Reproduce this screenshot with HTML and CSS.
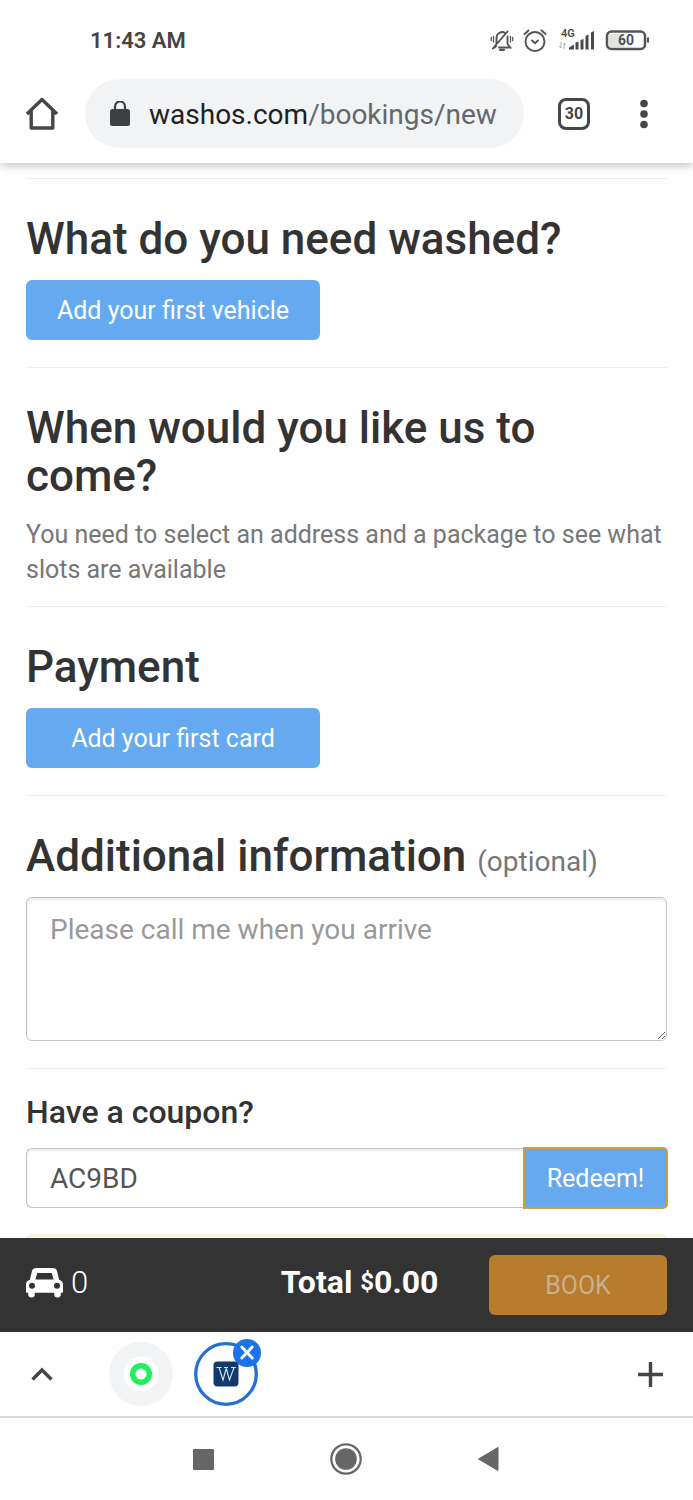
FILE: index.html
```html
<!DOCTYPE html>
<html lang="en">
<head>
<meta charset="utf-8">
<meta name="viewport" content="width=device-width, initial-scale=1">
<title>New booking</title>
<link rel="stylesheet" href="styles.css">
</head>
<body>
<header class="chrome">
  <div class="status">
    <span class="clock">11:43 AM</span>
    <div class="indicators">
      <svg class="bell" width="24" height="24" viewBox="0 0 24 24" fill="none" stroke="#555" stroke-width="1.9" stroke-linecap="round">
        <path d="M6.500 15V9a5.800 5.800 0 0 1 8.500-5.200M17.500 7.500V15l2.800 3.500H9M6.200 17.200l-2 1.500M2.800 19.500 17.500 2.500"/>
        <path d="M10 20.800h4" stroke-width="2.200"/>
        <path d="M3.500 7.500v5.500M1.300 8.500v3M20.500 7.500v5.500M22.700 8.500v3" stroke-width="1.300"/>
      </svg>
      <svg class="alarm" width="24" height="24" viewBox="0 0 24 24" fill="none" stroke="#555" stroke-width="1.900" stroke-linecap="round" stroke-linejoin="round">
        <circle cx="12" cy="12.500" r="9.500"/><path d="m9 11.500 3 2.700 3-2.700M1.500 5l4-3.500M22.500 5l-4-3.500"/>
      </svg>
      <svg class="signal" width="38" height="32" viewBox="0 -4 38 32" fill="#4a4a4a">
        <text x="3" y="8" class="network">4G</text>
        <path d="M11 20.500v-2l5-3v5zM17.500 20.500v-7l3-1v8zM22.500 20.500V11l3-1v10.500zM27.500 20.500V7l3-1.500v15zM33 20.500V3.500l3-1.500v18.500z"/>
        <path d="M3 13v6l-2-2M6 20v-6l2 2" fill="none" stroke="#aaa"/>
      </svg>
      <svg class="battery" width="45" height="22" viewBox="0 0 45 22">
        <rect x="4" y="4" width="15" height="13" fill="#e2e2e2"/>
        <rect x="2" y="1.500" width="38" height="17.500" rx="4.500" fill="none" stroke="#555" stroke-width="2.500"/>
        <path d="M43 7.500v5" stroke="#555" stroke-width="2.200"/>
        <text x="21" y="15" text-anchor="middle" class="charge">60</text>
      </svg>
    </div>
  </div>
  <div class="toolbar">
    <button class="icon-btn" aria-label="Home">
      <svg width="34" height="34" viewBox="0 0 34 34" fill="none" stroke="#444648" stroke-width="3.400" stroke-linejoin="round"><path d="M2 17 17 2.500 32 17M6.200 14v17h21.600V14"/></svg>
    </button>
    <button class="address">
      <svg width="20" height="26" viewBox="0 0 20 26"><rect y="8" width="20" height="17" rx="2.500" fill="#3c4043"/><path d="M5 9V5.500a5 5 0 0 1 10 0V9" fill="none" stroke="#3c4043" stroke-width="2.200"/></svg>
      <span class="url"><span class="host">washos.com</span>/bookings/new</span>
    </button>
    <button class="tab-count" aria-label="30 open tabs">30</button>
    <button class="icon-btn" aria-label="More options">
      <svg width="10" height="30" viewBox="0 0 10 30" fill="#444648"><circle cx="5" cy="4.500" r="3.800"/><circle cx="5" cy="15" r="3.800"/><circle cx="5" cy="25.500" r="3.800"/></svg>
    </button>
  </div>
</header>

<main class="page">
  <section class="block">
    <h2>What do you need washed?</h2>
    <button class="btn">Add your first vehicle</button>
  </section>
  <section class="block notes">
    <h2>When would you like us to come?</h2>
    <p>You need to select an address and a package to see what slots are available</p>
  </section>
  <section class="block">
    <h2>Payment</h2>
    <button class="btn">Add your first card</button>
  </section>
  <section class="block">
    <h2><label for="info">Additional information <small>(optional)</small></label></h2>
    <textarea id="info" class="field" placeholder="Please call me when you arrive"></textarea>
  </section>
  <section class="block coupon">
    <h3><label for="coupon">Have a coupon?</label></h3>
    <div class="group">
      <input id="coupon" class="field" type="text" value="AC9BD">
      <button class="redeem">Redeem!</button>
    </div>
    <div class="alert"></div>
  </section>
</main>

<section class="summary">
  <span class="cars">
    <svg width="37" height="30" viewBox="0 0 37 30"><path fill="#fff" fill-rule="evenodd" d="M10.500 0h16c2.500 0 4 1 4.600 3.300L33.200 12c2.500.500 3.800 2 3.800 4.500v7.300c0 .700-.300 1-1 1h-1.200v1.400a3.300 3.300 0 0 1-6.600 0v-1.400H8.800v1.400a3.300 3.300 0 0 1-6.600 0v-1.400H1c-.700 0-1-.300-1-1v-7.300C0 14 1.300 12.500 3.800 12l2.100-8.700C6.500 1 8 0 10.500 0zm.700 5L9.400 11.600h18.200L25.800 5zM6 14.700a3 3 0 1 0 0 6 3 3 0 0 0 0-6zm25 0a3 3 0 1 0 0 6 3 3 0 0 0 0-6z"/></svg>
    <span>0</span>
  </span>
  <strong class="total">Total <span class="currency">$</span>0.00</strong>
  <button class="book" disabled>BOOK</button>
</section>

<nav class="tabs" aria-label="Tab group">
  <button class="icon-btn" aria-label="Show all tabs">
    <svg width="22" height="14" viewBox="0 0 22 14" fill="none" stroke="#444648" stroke-width="3.400"><path d="m1.500 12.500 9.500-9.500 9.500 9.500"/></svg>
  </button>
  <button class="tab" aria-label="Other tab">
    <svg width="64" height="64" viewBox="0 0 64 64"><circle cx="32" cy="32" r="32" fill="#f1f3f4"/><circle cx="32" cy="32" r="17.500" fill="#fff"/><circle cx="32" cy="32" r="8.300" fill="none" stroke="#1df05a" stroke-width="5.500"/></svg>
  </button>
  <button class="tab current" aria-label="Close current tab">
    <svg width="64" height="64" viewBox="0 0 64 64"><circle cx="32" cy="32" r="30.300" fill="#fff" stroke="#2671d0" stroke-width="3.300"/><rect x="19.500" y="19.500" width="25" height="25" rx="4" fill="#103a6b"/><path d="M22.500 25.500h5M30 25.500h4M37 25.500h5M25 25.500l4 12.500 3.500-12.500M32 25.500l3.500 12.500 4.500-12.500" fill="none" stroke="#d5e6f5" stroke-width="1.100"/></svg>
    <svg class="close" width="28" height="28" viewBox="0 0 28 28"><circle cx="14" cy="14" r="14" fill="#1a73e8"/><path d="m8.800 8 10.400 11M19.200 8 8.800 19" stroke="#fff" stroke-width="3" stroke-linecap="round"/></svg>
  </button>
  <button class="icon-btn add" aria-label="New tab">
    <svg width="25" height="25" viewBox="0 0 25 25" stroke="#444648" stroke-width="3.400"><path d="M12.500 0v25M0 12.500h25"/></svg>
  </button>
</nav>

<nav class="system" aria-label="System navigation">
  <button class="icon-btn" aria-label="Recent apps"><svg width="21" height="21" viewBox="0 0 21 21"><rect width="21" height="21" rx="1" fill="#666"/></svg></button>
  <button class="icon-btn" aria-label="Home screen"><svg width="32" height="32" viewBox="0 0 32 32"><circle cx="16" cy="16" r="14.700" fill="none" stroke="#666" stroke-width="2.200"/><circle cx="16" cy="16" r="10.800" fill="#666"/></svg></button>
  <button class="icon-btn" aria-label="Back"><svg width="21" height="24" viewBox="0 0 21 24"><path d="M0.500 12 20 .500v23z" fill="#666" stroke="#666" stroke-linejoin="round"/></svg></button>
</nav>
</body>
</html>
```
FILE: styles.css
```css
* { box-sizing: border-box; }

body {
  margin: 0;
  height: 100vh;
  display: flex;
  flex-direction: column;
  overflow: hidden;
  background: #fefefe;
  color: #333;
  font-family: Roboto, "Liberation Sans", sans-serif;
  font-size: 25px;
}

button, input, textarea { font: inherit; margin: 0; }
button { padding: 0; border: 0; background: none; color: inherit; }
svg { display: block; flex: none; }
h2, h3, p { margin: 0; }

.icon-btn { display: flex; }

.chrome {
  flex: none;
  position: relative;
  z-index: 1;
  background: #fefefe;
  box-shadow: 0 2px 9px rgba(0, 0, 0, .26);
}

.status {
  display: flex;
  justify-content: space-between;
  align-items: center;
  height: 79px;
  padding: 2px 43px 0 90px;
}
.clock { font-size: 22px; font-weight: 600; color: #444; }
.indicators { display: flex; align-items: center; gap: 9px; }
.signal { margin-left: 2px; }
.network { font-size: 11px; font-weight: 600; }
.charge { font-size: 14px; font-weight: 600; fill: #4a4a4a; }

.toolbar {
  display: flex;
  align-items: center;
  height: 84px;
  padding: 0 44px 15px 25px;
}
.address {
  flex: 1;
  min-width: 0;
  height: 69px;
  margin: 0 34px 0 26px;
  padding: 0 24px 0 25px;
  border-radius: 35px;
  display: flex;
  align-items: center;
  gap: 19px;
  background: #f1f3f5;
  text-align: left;
}
.url {
  overflow: hidden;
  white-space: nowrap;
  padding-top: 2px;
  font-size: 28px;
  color: #64676b;
}
.host { color: #202124; }
.tab-count {
  width: 32px;
  height: 32px;
  margin-right: 49px;
  border: 3px solid #444648;
  border-radius: 8px;
  color: #444648;
  font-size: 16px;
  font-weight: 700;
  line-height: 26px;
}

.page {
  flex: 1;
  min-height: 0;
  overflow: hidden;
  padding: 15px 26px 0;
}
.block {
  padding: 36px 0 27px;
  border-top: 1px solid #eee;
}
.notes { padding-bottom: 19px; }
.coupon { padding-top: 23px; }

h2 {
  margin-bottom: 17px;
  font-size: 44px;
  font-weight: 500;
  line-height: 48px;
}
h2 small {
  font-size: 28px;
  font-weight: 400;
  line-height: 28px;
  color: #777;
}
h3 {
  margin-bottom: 16px;
  font-size: 32px;
  font-weight: 500;
  line-height: 40px;
}
p { line-height: 35px; color: #777; }

.btn {
  display: block;
  width: 294px;
  height: 60px;
  border-radius: 6px;
  background: #65aaf0;
  color: #fff;
}

.field {
  display: block;
  width: 100%;
  padding: 12px 23px;
  border: 1px solid #c2c2c2;
  border-radius: 6px;
  background: #fff;
  box-shadow: inset 0 2px 2px rgba(0, 0, 0, .08);
  color: #555;
  font-size: 28px;
  line-height: 40px;
}
textarea.field { height: 144px; }
.field::placeholder { color: #999; opacity: 1; }

.group { display: flex; }
.group .field {
  flex: 1;
  min-width: 0;
  height: 60px;
  padding: 0 23px;
  border-right: 0;
  border-radius: 6px 0 0 6px;
}
.redeem {
  width: 143px;
  height: 60px;
  border-radius: 0 4px 4px 0;
  background: #65aaf0;
  color: #fff;
  outline: 2px solid #cb9f3e;
  outline-offset: -1px;
}
.alert {
  height: 60px;
  margin-top: 26px;
  border: 2px solid #f5efd3;
  border-radius: 6px;
  background: #fcf8e3;
}

.summary {
  flex: none;
  display: flex;
  align-items: center;
  justify-content: space-between;
  height: 94px;
  padding: 0 26px;
  background: #333;
  color: #fff;
}
.cars {
  display: flex;
  align-items: center;
  gap: 8px;
  padding-bottom: 5px;
  font-size: 31px;
  font-weight: 300;
}
.total {
  margin-left: 142px;
  padding-bottom: 6px;
  font-size: 32px;
  font-weight: 700;
}
.currency { font-size: 24px; line-height: 24px; vertical-align: 3px; }
.book {
  width: 178px;
  height: 60px;
  border-radius: 6px;
  background: #b77c2d;
  color: #c9b08d;
}

.tabs {
  flex: none;
  display: flex;
  align-items: center;
  height: 86px;
  padding: 0 30px 0 31px;
  border-bottom: 2px solid #d8d8d8;
}
.tab { position: relative; margin-left: 56px; }
.current { margin-left: 21px; }
.close { position: absolute; top: -3px; right: -3px; }
.add { margin-left: auto; }

.system {
  flex: none;
  display: flex;
  align-items: center;
  justify-content: center;
  gap: 116px;
  height: 82px;
  padding-right: 2px;
}
```
